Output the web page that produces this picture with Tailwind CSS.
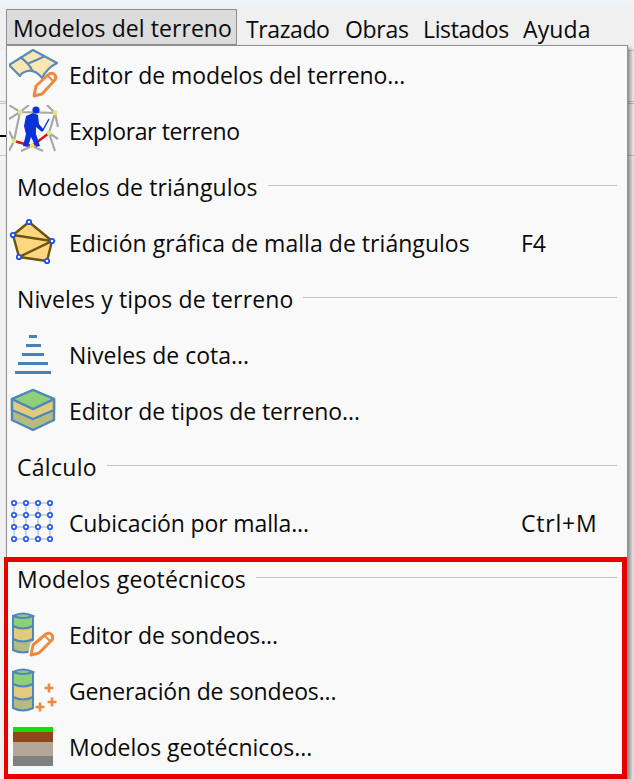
<!doctype html>
<html>
<head>
<meta charset="utf-8">
<script src="https://cdn.jsdelivr.net/npm/@tailwindcss/browser@4"></script>
</head>
<body class="m-0">
<div class="relative w-[634px] h-[779px] overflow-hidden bg-[#f0f0f0] font-['Open_Sans','Noto_Sans',sans-serif] text-[23px] text-[#0a0a0a]">
  <div class="h-[6px] bg-[#eef3f8]"></div>
  <!-- menu bar -->
  <div class="flex h-[39px] items-start pt-[3px] pl-[6px]">
    <div class="h-[36px] w-[231px] flex-none border border-[#8f8f8f] bg-[#dcdcdc] pl-[6px] pt-[2px] leading-[33px] tracking-[0.07px]">Modelos del terreno</div>
    <div class="w-[108px] flex-none pl-[9px] pt-[2px] leading-[36px] tracking-[-0.4px]">Trazado</div>
    <div class="w-[78px] flex-none pt-[2px] leading-[36px] tracking-[-0.3px]">Obras</div>
    <div class="w-[100px] flex-none pt-[2px] leading-[36px] tracking-[-0.35px]">Listados</div>
    <div class="flex-none pt-[2px] leading-[36px] tracking-[0.1px]">Ayuda</div>
  </div>
  <!-- background sliver -->
  <div class="absolute left-0 top-[50px] w-[634px] h-[110px] bg-[#f4f4f4]">
    <div class="absolute right-0 top-0 w-[6px] h-full border-t border-[#c8c8c8]"></div>
    <div class="absolute left-0 top-[51px] w-full h-[3px] border-y border-[#c4c4c4]"></div>
    <div class="absolute left-0 top-[85px] w-[6px] h-[2px] bg-black"></div>
    <div class="absolute left-0 top-[105px] w-full h-px bg-[#c8c8c8]"></div>
  </div>
  <!-- dropdown -->
  <div class="absolute left-[6px] top-[45px] w-[622px] h-[734px] border-l border-t border-r border-[#8f8f8f] bg-[#f9f9f9] shadow-[3px_3px_4px_rgba(0,0,0,0.4)]">
    <div class="flex h-[56px] items-center">
      <div class="w-[62px] flex-none"><svg width="50" height="50" viewBox="0 0 50 50" class="ml-[2px]">
        <path d="M0 16 L24 1 L48 14 Q38 19 33 29 Q26 20 18 22 Q12 24 11 27 Z" fill="#fbe7b4" stroke="#5b8ab5" stroke-width="2.2" stroke-linejoin="round"/>
        <path d="M11 8 Q20 14 24 23 M18 15 Q28 11 36 7" fill="none" stroke="#5b8ab5" stroke-width="2.2"/>
        <path d="M25 47 L27 37 L40 25 Q44 23 46 26 Q48 29 45 32 L33 45 Z" fill="#f9f9f9" stroke="#ee8a3f" stroke-width="3" stroke-linejoin="round"/>
        <path d="M39 27 L44 32" stroke="#ee8a3f" stroke-width="2"/>
      </svg></div>
      <span class="pt-[2px] tracking-[-0.1px]">Editor de modelos del terreno...</span>
    </div>
    <div class="flex h-[56px] items-center">
      <div class="w-[62px] flex-none"><svg width="50" height="50" viewBox="0 0 50 50" class="ml-[2px]">
        <path d="M0 0 L11 7 L46 8 L40 28 L23 41 L5 36 L11 7 M11 7 L0 14 M11 7 L20 0 M46 8 L38 0 M46 8 L49 22 M40 28 L49 34 M40 28 L46 46 M5 36 L0 26 M5 36 L0 46 M23 41 L12 46 M23 41 L34 46" fill="none" stroke="#a8a8a8" stroke-width="2.2"/>
        <path d="M5 36 L23 41 L40 28" fill="none" stroke="#e01515" stroke-width="2.4"/>
        <g fill="#dbe87c"><circle cx="11" cy="7" r="2.4"/><circle cx="46" cy="8" r="2.4"/><circle cx="40" cy="28" r="2.4"/><circle cx="5" cy="36" r="2.4"/><circle cx="23" cy="41" r="2.4"/></g>
        <circle cx="27" cy="5" r="3.6" fill="#0b32d8"/>
        <path d="M17 11 L24 8 L29 10 L30 19 L35 25 L33 27 L27 22 L27 29 L31 41 L27 42 L22 32 L19 42 L14 41 L17 29 L15 21 Z" fill="#0b32d8"/>
        <path d="M34 25 L40 14" stroke="#0b32d8" stroke-width="1.4" fill="none"/>
      </svg></div>
      <span class="pt-[2px] tracking-[-0.38px]">Explorar terreno</span>
    </div>
    <div class="flex h-[56px] items-center pl-[10px] pr-[10px]"><span class="pr-[10px] pt-[2px] tracking-[0.1px]">Modelos de triángulos</span><span class="mb-[2px] h-px flex-1 bg-[#c4c4c4]"></span></div>
    <div class="flex h-[56px] items-center">
      <div class="w-[62px] flex-none"><svg width="50" height="50" viewBox="0 0 50 50" class="ml-[2px]">
        <path d="M20 5 L43 24 L38 44 L10 40 L4 18 Z" fill="#fdd77f" stroke="#6b5310" stroke-width="2.4" stroke-linejoin="round"/>
        <path d="M4 18 L43 24 L10 40" fill="none" stroke="#6b5310" stroke-width="2.4"/>
        <g fill="#fff" stroke="#1a4ff0" stroke-width="1.8"><circle cx="20" cy="5" r="2.2"/><circle cx="4" cy="18" r="2.2"/><circle cx="43" cy="24" r="2.2"/><circle cx="10" cy="40" r="2.2"/><circle cx="38" cy="44" r="2.2"/></g>
      </svg></div>
      <span class="w-[452px] pt-[2px] tracking-[0.04px]">Edición gráfica de malla de triángulos</span><span class="pt-[2px]">F4</span>
    </div>
    <div class="flex h-[56px] items-center pl-[10px] pr-[10px]"><span class="pr-[10px] pt-[2px] tracking-[0.12px]">Niveles y tipos de terreno</span><span class="mb-[2px] h-px flex-1 bg-[#c4c4c4]"></span></div>
    <div class="flex h-[56px] items-center">
      <div class="w-[62px] flex-none"><svg width="50" height="50" viewBox="0 0 50 50" class="ml-[2px]">
        <g fill="#4a7fb5"><rect x="20" y="6" width="8" height="3"/><rect x="17" y="15" width="15" height="3"/><rect x="13" y="24" width="22" height="3"/><rect x="9" y="33" width="30" height="3"/><rect x="6" y="42" width="36" height="3"/></g>
      </svg></div>
      <span class="pt-[2px]">Niveles de cota...</span>
    </div>
    <div class="flex h-[56px] items-center">
      <div class="w-[62px] flex-none"><svg width="50" height="50" viewBox="0 0 50 50" class="ml-[2px]">
        <path d="M3 14 L24 5 L45 14 V35 L24 45 L3 35 Z" fill="#b6bb80" stroke="#4f86bb" stroke-width="2.4" stroke-linejoin="round"/>
        <path d="M3 14 V25 L24 34 L45 25 V14 L24 24 Z" fill="#e1cb7d" stroke="#4f86bb" stroke-width="2.4" stroke-linejoin="round"/>
        <path d="M3 14 L24 5 L45 14 L24 24 Z" fill="#8ed07a" stroke="#4f86bb" stroke-width="2.4" stroke-linejoin="round"/>
      </svg></div>
      <span class="pt-[2px] tracking-[-0.1px]">Editor de tipos de terreno...</span>
    </div>
    <div class="flex h-[56px] items-center pl-[10px] pr-[10px]"><span class="pr-[10px] pt-[2px] tracking-[0.3px]">Cálculo</span><span class="mb-[2px] h-px flex-1 bg-[#c4c4c4]"></span></div>
    <div class="flex h-[56px] items-center">
      <div class="w-[62px] flex-none"><svg width="50" height="50" viewBox="0 0 50 50" class="ml-[2px]">
        <path d="M5 6 H41 M5 18 H41 M5 30 H41 M5 42 H41 M5 6 V42 M17 6 V42 M29 6 V42 M41 6 V42" stroke="#d2d2d2" stroke-width="2"/>
        <g fill="#fff" stroke="#2f5fe8" stroke-width="1.8">
          <circle cx="5" cy="6" r="2.2"/><circle cx="17" cy="6" r="2.2"/><circle cx="29" cy="6" r="2.2"/><circle cx="41" cy="6" r="2.2"/>
          <circle cx="5" cy="18" r="2.2"/><circle cx="17" cy="18" r="2.2"/><circle cx="29" cy="18" r="2.2"/><circle cx="41" cy="18" r="2.2"/>
          <circle cx="5" cy="30" r="2.2"/><circle cx="17" cy="30" r="2.2"/><circle cx="29" cy="30" r="2.2"/><circle cx="41" cy="30" r="2.2"/>
          <circle cx="5" cy="42" r="2.2"/><circle cx="17" cy="42" r="2.2"/><circle cx="29" cy="42" r="2.2"/><circle cx="41" cy="42" r="2.2"/>
        </g>
      </svg></div>
      <span class="w-[452px] pt-[2px] tracking-[-0.13px]">Cubicación por malla...</span><span class="pt-[2px] tracking-[0.8px]">Ctrl+M</span>
    </div>
    <div class="flex h-[56px] items-center pl-[10px] pr-[10px]"><span class="pr-[10px] pt-[2px] tracking-[0.2px]">Modelos geotécnicos</span><span class="mb-[2px] h-px flex-1 bg-[#c4c4c4]"></span></div>
    <div class="flex h-[56px] items-center">
      <div class="w-[62px] flex-none"><svg width="50" height="50" viewBox="0 0 50 50" class="ml-[2px]">
        <path d="M4 30 H24 V41 Q14 47 4 41 Z" fill="#b6bb80"/><path d="M4 17 H24 V30 Q14 35 4 30 Z" fill="#e1cb7d"/><path d="M4 7 Q14 1 24 7 V17 Q14 22 4 17 Z" fill="#8ed07a"/>
        <path d="M4 7 Q14 2 24 7 Q14 11 4 7 V41 Q14 46 24 41 V7 M4 17 Q14 22 24 17 M4 30 Q14 35 24 30" fill="none" stroke="#4f86bb" stroke-width="2"/>
        <path d="M22 46 L24 36 L37 25 Q41 23 43 26 Q45 29 42 32 L30 44 Z" fill="#f9f9f9" stroke="#f9f9f9" stroke-width="6" stroke-linejoin="round"/>
        <path d="M22 46 L24 36 L37 25 Q41 23 43 26 Q45 29 42 32 L30 44 Z" fill="#f9f9f9" stroke="#ee8a3f" stroke-width="3" stroke-linejoin="round"/>
        <path d="M36 27 L41 32" stroke="#ee8a3f" stroke-width="2"/>
      </svg></div>
      <span class="pt-[2px] tracking-[-0.15px]">Editor de sondeos...</span>
    </div>
    <div class="flex h-[56px] items-center">
      <div class="w-[62px] flex-none"><svg width="50" height="50" viewBox="0 0 50 50" class="ml-[2px]">
        <path d="M4 32 H24 V43 Q14 49 4 43 Z" fill="#b6bb80"/><path d="M4 19 H24 V32 Q14 37 4 32 Z" fill="#e1cb7d"/><path d="M4 7 Q14 1 24 7 V19 Q14 24 4 19 Z" fill="#8ed07a"/>
        <path d="M4 7 Q14 2 24 7 Q14 11 4 7 V43 Q14 48 24 43 V7 M4 19 Q14 24 24 19 M4 32 Q14 37 24 32" fill="none" stroke="#4f86bb" stroke-width="2"/>
        <path d="M35.5 23 H44.5 M40 18.5 V27.5 M26.5 42 H35.5 M31 37.5 V46.5 M38.5 37 H47.5 M43 32.5 V41.5" stroke="#ee8a3f" stroke-width="2.6"/>
      </svg></div>
      <span class="pt-[2px] tracking-[-0.17px]">Generación de sondeos...</span>
    </div>
    <div class="flex h-[56px] items-center">
      <div class="w-[62px] flex-none"><svg width="50" height="50" viewBox="0 0 50 50" class="ml-[2px]">
        <rect x="4" y="6" width="40" height="5" fill="#0ee00e"/><rect x="4" y="11" width="40" height="10" fill="#8d471b"/><rect x="4" y="21" width="40" height="14" fill="#b5a69a"/><rect x="4" y="35" width="40" height="10" fill="#808080"/>
      </svg></div>
      <span class="pt-[2px]">Modelos geotécnicos...</span>
    </div>
  </div>
  <!-- red highlight -->
  <div class="absolute left-[4px] top-[557px] w-[623px] h-[222px] border-[5px] border-l-[4px] border-[#e80000]"></div>
</div>
</body>
</html>
